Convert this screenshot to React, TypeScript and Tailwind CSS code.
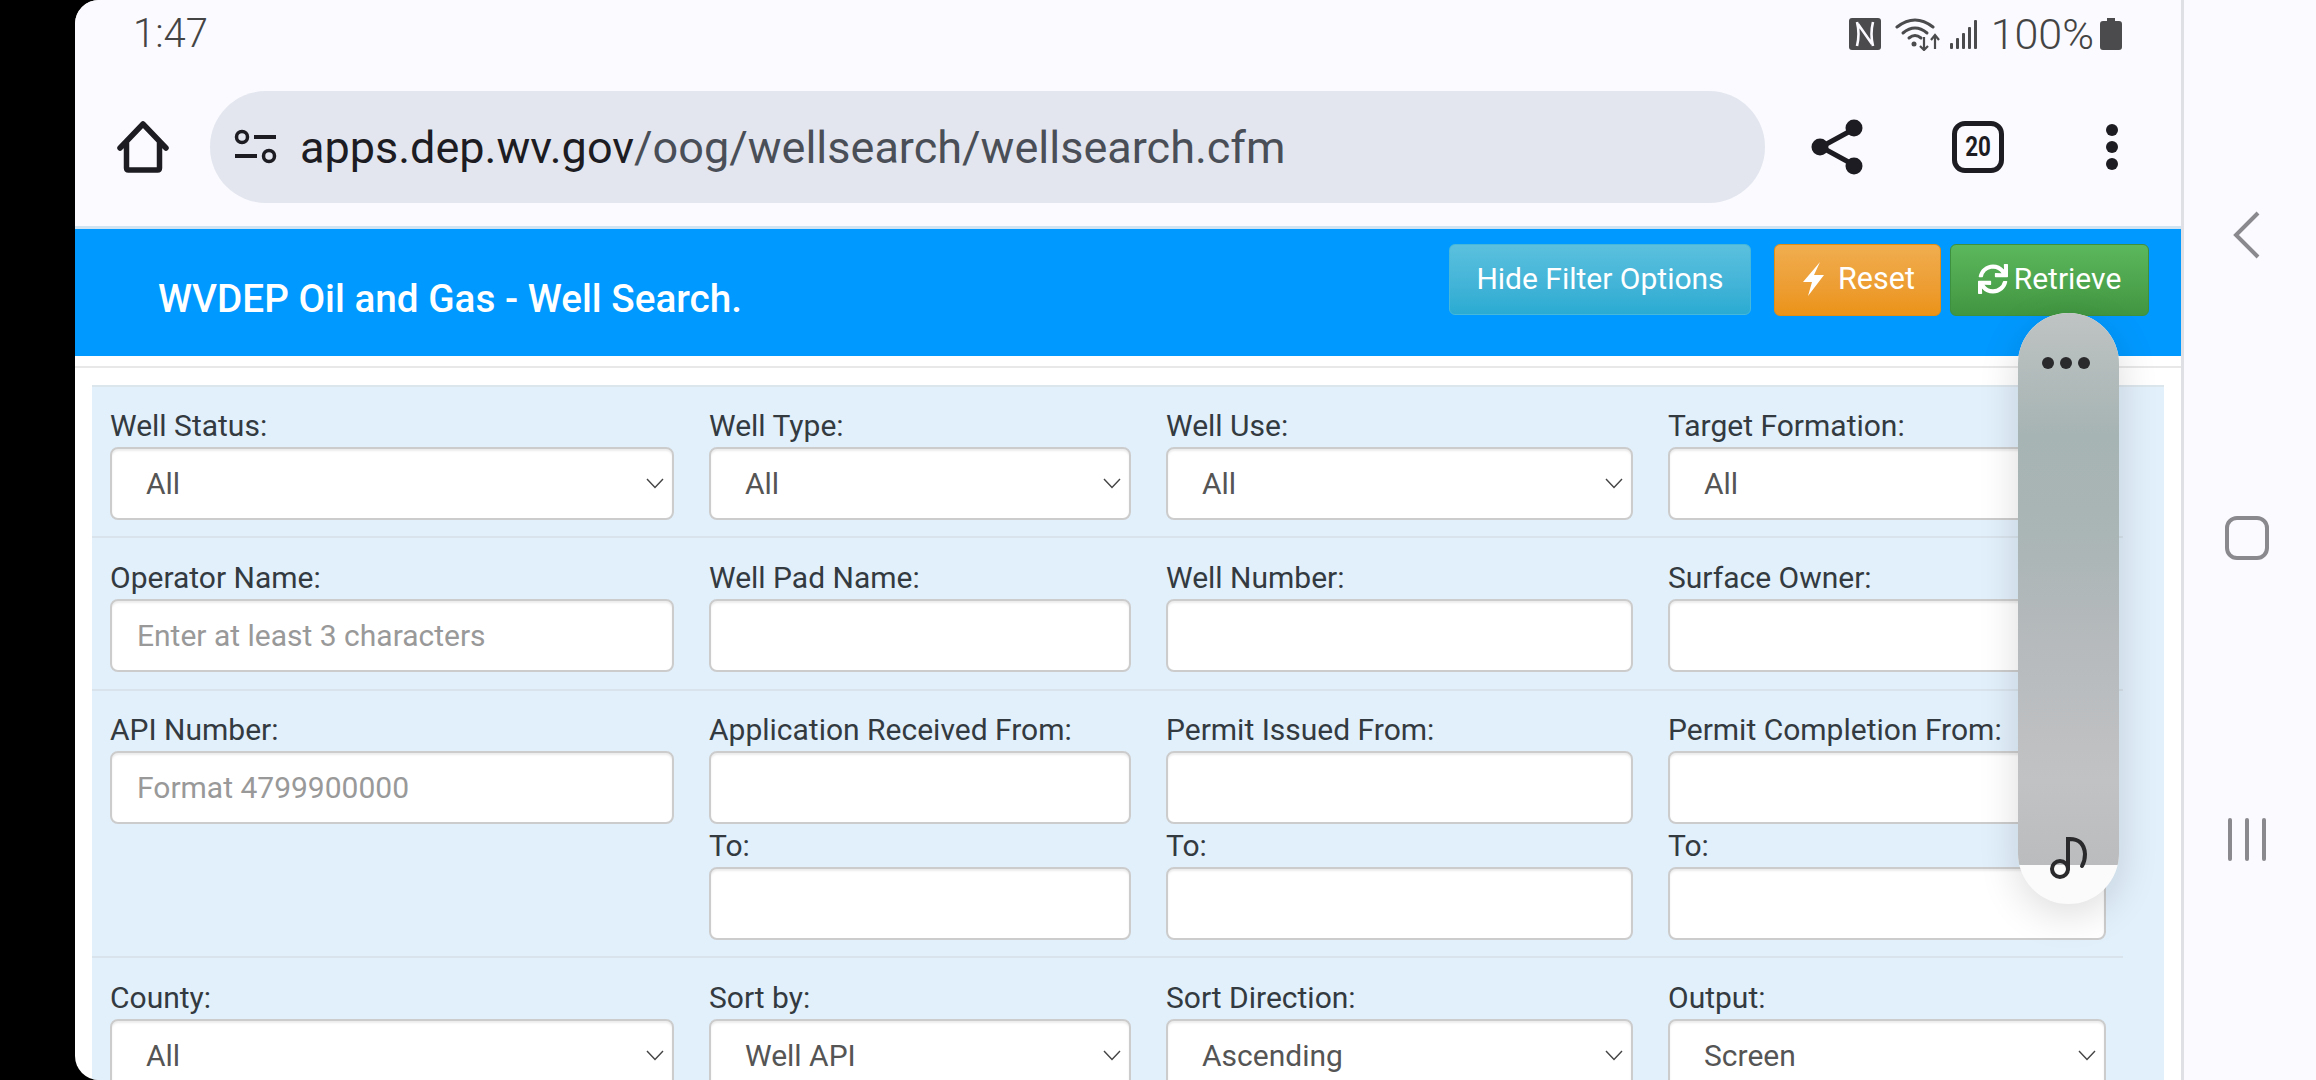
import React from 'react';
import { FaSync } from 'react-icons/fa';

const font = { fontFamily: 'Roboto, sans-serif' };

const Chevron = () => (
  <svg width="18" height="11" viewBox="0 0 18 11" className="shrink-0">
    <path d="M1 1 L9 9.5 L17 1" fill="none" stroke="#444" strokeWidth="1.4" />
  </svg>
);

const SelectField: React.FC<{ label: string; value: string }> = ({ label, value }) => (
  <div className="flex flex-col">
    <label className="mb-[2px] h-[38px] text-[30px] leading-[38px] text-[#333a40]">{label}</label>
    <div className="flex h-[73px] shrink-0 items-center justify-between rounded-[8px] border-2 border-[#ccc] bg-white pl-[34px] pr-[8px] text-[30px] text-[#555] shadow-[inset_0_2px_2px_rgba(0,0,0,0.08)]">
      <span>{value}</span>
      <Chevron />
    </div>
  </div>
);

const TextField: React.FC<{ label: string; placeholder?: string }> = ({ label, placeholder }) => (
  <div className="flex flex-col">
    <label className="mb-[2px] h-[38px] text-[30px] leading-[38px] text-[#333a40]">{label}</label>
    <input
      readOnly
      placeholder={placeholder}
      className="h-[73px] w-full rounded-[8px] border-2 border-[#ccc] bg-white px-[25px] text-[30px] text-[#555] shadow-[inset_0_2px_2px_rgba(0,0,0,0.08)] placeholder:text-[#999]"
    />
  </div>
);

const Row: React.FC<{ children: React.ReactNode; className?: string }> = ({ children, className }) => (
  <div className={`grid w-[2031px] grid-cols-[599px_457px_502px_473px] border-b-2 border-[#d8e3ec] ${className ?? ''}`}>
    {children}
  </div>
);

const Col: React.FC<{ children: React.ReactNode }> = ({ children }) => (
  <div className="flex flex-col pl-[18px] pr-[17px]">{children}</div>
);

const HomeIcon = () => (
  <svg width="52" height="52" viewBox="0 0 52 52">
    <path d="M3 27 L26 3 L49 27 M9.5 21 V47 Q9.5 49 11.5 49 H40.5 Q42.5 49 42.5 47 V21" fill="none" stroke="#1c1c22" strokeWidth="5.5" strokeLinejoin="round" strokeLinecap="round" />
  </svg>
);

const TuneIcon = () => (
  <svg width="44" height="36" viewBox="0 0 44 36">
    <circle cx="8" cy="8" r="5.5" fill="none" stroke="#1c1c22" strokeWidth="3.5" />
    <rect x="20" y="6" width="22" height="4" fill="#1c1c22" />
    <rect x="1" y="25" width="22" height="4" fill="#1c1c22" />
    <circle cx="35" cy="27" r="5.5" fill="none" stroke="#1c1c22" strokeWidth="3.5" />
  </svg>
);

const ShareIcon = () => (
  <svg width="54" height="58" viewBox="0 0 54 58">
    <path d="M43 11 L10 29 L43 47" fill="none" stroke="#1c1c22" strokeWidth="5" />
    <circle cx="43" cy="10" r="8.5" fill="#1c1c22" />
    <circle cx="9" cy="29" r="8.5" fill="#1c1c22" />
    <circle cx="43" cy="48" r="8.5" fill="#1c1c22" />
  </svg>
);

const StatusIcons = () => (
  <>
    <svg width="32" height="32" viewBox="0 0 32 32">
      <rect width="32" height="32" rx="3" fill="#4b4b4d" />
      <path d="M8 4 Q11 16 8 28 M24 4 Q21 16 24 28 M9 6 L23 26" fill="none" stroke="#fafaff" strokeWidth="2.6" />
    </svg>
    <svg width="46" height="34" viewBox="0 0 46 34" className="ml-[14px]">
      <g fill="none" stroke="#4b4b4d" strokeWidth="3" strokeLinecap="round">
        <path d="M2 10 Q20 -4 38 10" />
        <path d="M8 16 Q20 6 32 16" />
        <path d="M14 21 Q20 16 26 21" />
      </g>
      <circle cx="19" cy="27" r="2.5" fill="#4b4b4d" />
      <path d="M29 20 V33 M25 29 L29 33 L33 29 M40 32 V18 M36 23 L40 18 L44 23" fill="none" stroke="#4b4b4d" strokeWidth="2.2" />
    </svg>
    <svg width="28" height="30" viewBox="0 0 28 30" className="ml-[9px]">
      <rect x="0" y="24" width="3" height="6" rx="1" fill="#4b4b4d" />
      <rect x="6" y="19" width="3" height="11" rx="1" fill="#4b4b4d" />
      <rect x="12" y="14" width="3" height="16" rx="1" fill="#4b4b4d" />
      <rect x="18" y="8" width="3" height="22" rx="1" fill="#4b4b4d" />
      <rect x="24" y="1" width="3" height="29" rx="1" fill="#4b4b4d" />
    </svg>
    <span className="ml-[13px] text-[43px] font-light leading-none text-[#444]">100%</span>
    <svg width="22" height="32" viewBox="0 0 22 32" className="ml-[6px]">
      <path d="M7 0 H15 V3 H19 Q22 3 22 6 V29 Q22 32 19 32 H3 Q0 32 0 29 V6 Q0 3 3 3 H7 Z" fill="#4b4b4d" />
    </svg>
  </>
);

const BoltIcon = () => (
  <svg width="22" height="34" viewBox="0 0 22 34" className="mr-[13px] shrink-0">
    <path d="M17 0 L0 20 H9 L5 34 L21 13 H11 Z" fill="#fff" />
  </svg>
);

export default function App() {
  return (
    <div className="relative flex h-[1080px] w-[2316px] overflow-hidden bg-black" style={font}>
      <div className="w-[75px] shrink-0" />

      <div className="flex w-[2106px] shrink-0 flex-col overflow-hidden rounded-l-[24px] bg-white">
        <div className="flex h-[68px] shrink-0 items-center justify-between bg-[#fafaff] pl-[58px] pr-[59px]">
          <span className="text-[40px] font-light leading-none text-[#444]">1:47</span>
          <div className="flex items-center">
            <StatusIcons />
          </div>
        </div>

        <div className="flex h-[161px] shrink-0 items-center border-b-[3px] border-[#cfe3f3] bg-[#fafaff]">
          <div className="ml-[42px] flex w-[52px] justify-center">
            <HomeIcon />
          </div>
          <div className="ml-[41px] flex h-[112px] w-[1555px] items-center rounded-full bg-[#e3e6ef] pl-[24px]">
            <TuneIcon />
            <span className="ml-[22px] text-[45px] leading-none text-[#1c1c22]">
              apps.dep.wv.gov<span className="text-[#4a4f57]">/oog/wellsearch/wellsearch.cfm</span>
            </span>
          </div>
          <div className="ml-[46px] flex w-[54px] justify-center">
            <ShareIcon />
          </div>
          <div className="ml-[87px] flex h-[52px] w-[52px] items-center justify-center rounded-[13px] border-[5px] border-[#1c1c22] text-[28px] font-bold leading-none text-[#1c1c22]">
            <span className="scale-x-[0.8]">20</span>
          </div>
          <div className="ml-[102px] flex flex-col gap-[5px]">
            <div className="h-[12px] w-[12px] rounded-full bg-[#1c1c22]" />
            <div className="h-[12px] w-[12px] rounded-full bg-[#1c1c22]" />
            <div className="h-[12px] w-[12px] rounded-full bg-[#1c1c22]" />
          </div>
        </div>

        <div className="flex h-[127px] shrink-0 bg-[#0099ff] pl-[83px] pr-[32px]">
          <div className="flex flex-1 items-center pt-[13px] text-[38.7px] font-medium text-white">
            WVDEP Oil and Gas - Well Search.
          </div>
          <div className="flex items-start pt-[15px] text-[30px] text-white">
            <button className="flex h-[71px] w-[302px] items-center justify-center rounded-[6px] border border-[#46b8da] bg-gradient-to-b from-[#5bc0de] to-[#2aabd2] pb-[2px]">
              Hide Filter Options
            </button>
            <button className="ml-[23px] flex h-[72px] w-[167px] items-center justify-center rounded-[6px] border border-[#e38d13] bg-gradient-to-b from-[#f0ad4e] to-[#eb9316] pb-[3px] pl-[3px]">
              <BoltIcon />
              <span className="text-[30.5px]">Reset</span>
            </button>
            <button className="ml-[9px] flex h-[72px] w-[199px] items-center justify-center rounded-[6px] border border-[#3e8f3e] bg-gradient-to-b from-[#5cb85c] to-[#419641] pb-[3px]">
              <FaSync className="mr-[6px] text-[30px]" />
              Retrieve
            </button>
          </div>
        </div>

        <div className="h-[12px] shrink-0 border-b-2 border-[#e8e8e8] bg-white" />

        <div className="mx-[17px] mt-[17px] min-h-0 flex-1 border-t-2 border-[#dbe5ec] bg-[#e2f0fc]">
          <Row className="h-[151px] pt-[20px]">
            <Col><SelectField label="Well Status:" value="All" /></Col>
            <Col><SelectField label="Well Type:" value="All" /></Col>
            <Col><SelectField label="Well Use:" value="All" /></Col>
            <Col><SelectField label="Target Formation:" value="All" /></Col>
          </Row>
          <Row className="h-[153px] pt-[21px]">
            <Col><TextField label="Operator Name:" placeholder="Enter at least 3 characters" /></Col>
            <Col><TextField label="Well Pad Name:" /></Col>
            <Col><TextField label="Well Number:" /></Col>
            <Col><TextField label="Surface Owner:" /></Col>
          </Row>
          <Row className="h-[267px] pt-[20px]">
            <Col><TextField label="API Number:" placeholder="Format 4799900000" /></Col>
            {['Application Received From:', 'Permit Issued From:', 'Permit Completion From:'].map((label) => (
              <Col key={label}>
                <TextField label={label} />
                <div className="mt-[3px]">
                  <TextField label="To:" />
                </div>
              </Col>
            ))}
          </Row>
          <div className="grid w-[2031px] grid-cols-[599px_457px_502px_473px] pt-[21px]">
            <Col><SelectField label="County:" value="All" /></Col>
            <Col><SelectField label="Sort by:" value="Well API" /></Col>
            <Col><SelectField label="Sort Direction:" value="Ascending" /></Col>
            <Col><SelectField label="Output:" value="Screen" /></Col>
          </div>
        </div>
      </div>

      <div className="flex flex-1 flex-col items-center border-l-[3px] border-[#dfe0e6] bg-[#fafaff] pr-[7px]">
        <svg width="28" height="48" viewBox="0 0 28 48" className="mt-[211px]">
          <path d="M25 2 L3 24 L25 46" fill="none" stroke="#8a8a8e" strokeWidth="4" />
        </svg>
        <div className="mt-[257px] h-[44px] w-[44px] rounded-[12px] border-[4px] border-[#8a8a8e]" />
        <div className="mt-[258px] flex h-[43px] gap-[13px]">
          <div className="h-full w-[4px] rounded-full bg-[#8a8a8e]" />
          <div className="h-full w-[4px] rounded-full bg-[#8a8a8e]" />
          <div className="h-full w-[4px] rounded-full bg-[#8a8a8e]" />
        </div>
      </div>

      {/* floating edge panel handle */}
      <div className="absolute left-[2018px] top-[313px] flex h-[591px] w-[101px] flex-col overflow-hidden rounded-full bg-[#fbfbfb] shadow-[0_10px_40px_rgba(0,0,0,0.14)]">
        <div className="relative h-[552px] bg-[linear-gradient(180deg,#bfc3c3_0%,#a6b4b3_22%,#aab5b5_40%,#b6babc_60%,#c1c2c4_85%,#bbbcbd_100%)]">
          <div className="absolute left-[24px] top-[44px] flex gap-[6px]">
            <div className="h-[12px] w-[12px] rounded-full bg-[#2a2a2c]" />
            <div className="h-[12px] w-[12px] rounded-full bg-[#2a2a2c]" />
            <div className="h-[12px] w-[12px] rounded-full bg-[#2a2a2c]" />
          </div>
        </div>
        <svg width="42" height="46" viewBox="0 0 42 46" className="absolute left-[30px] top-[522px]">
          <circle cx="12" cy="34" r="8" fill="none" stroke="#2a2a2c" strokeWidth="4" />
          <path d="M20 34 V4 Q36 3 37 19 Q37 26 34 31" fill="none" stroke="#2a2a2c" strokeWidth="4" strokeLinecap="round" />
        </svg>
      </div>
    </div>
  );
}
